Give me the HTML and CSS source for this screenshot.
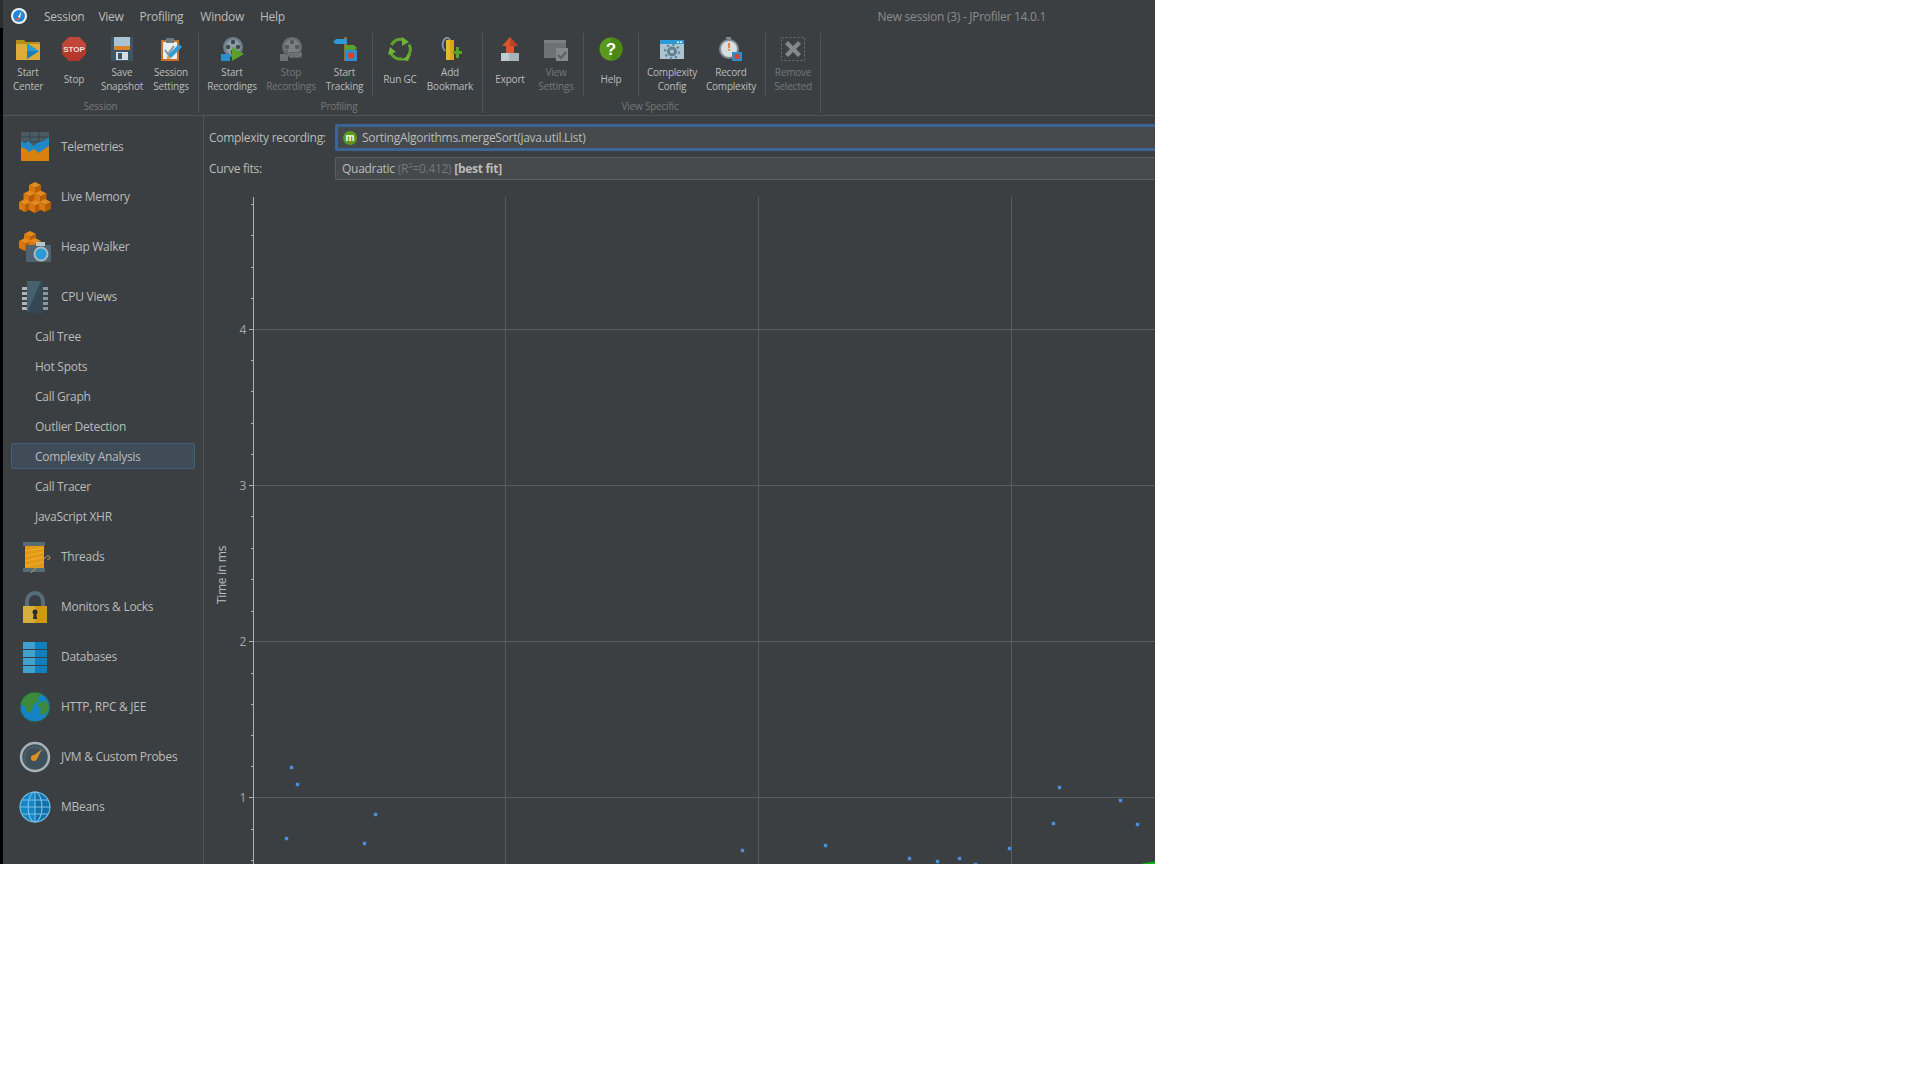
FILE: index.html
```html
<!DOCTYPE html>
<html lang="en">
<head>
<meta charset="utf-8">
<title>New session (3) - JProfiler 14.0.1</title>
<link rel="stylesheet" href="styles.css">
</head>
<body>
<div class="app">
  <div class="edge"></div>
  <div class="shell">
    <header class="menubar">
      <svg class="logo" viewBox="0 0 16 16"><circle cx="8" cy="8" r="8" fill="#eef4fa"/><circle cx="8" cy="8" r="6" fill="#1f86d8"/><path d="M10.500 3 7 9l2 1z" fill="#fff"/><circle cx="7" cy="11" r="1.600" fill="#e4572e"/></svg>
      <nav class="menus"><span>Session</span><span>View</span><span>Profiling</span><span>Window</span><span>Help</span></nav>
      <div class="title">New session (3) - JProfiler 14.0.1</div>
    </header>

    <div class="toolbar">
      <section class="group group-session">
        <div class="tools">
          <div class="tool"><svg class="ticon" viewBox="0 0 24 24"><path d="M0 3h8l2 2h14v18H0z" fill="#b88f1f"/><path d="M0 7h24v16H0z" fill="#dcae38"/><path d="M11 6l12 8-12 8z" fill="#2a9bd6"/><path d="M11 14h12l-12 8z" fill="#1c7fb8"/></svg><div class="tlabel">Start<br>Center</div></div>
          <div class="tool"><svg class="ticon" viewBox="0 0 24 24"><path d="M7 0h10l7 7v10l-7 7H7l-7-7V7z" fill="#b5382b"/><path d="M7 0h10l7 7v5H0V7z" fill="#c2473a"/><text class="stoptext" x="12" y="15" text-anchor="middle">STOP</text></svg><div class="tlabel">Stop</div></div>
          <div class="tool"><svg class="ticon" viewBox="0 0 24 24"><path d="M1 0h22v24H1z" fill="#3d5564"/><path d="M4 0h16v10H4z" fill="#a9c5d4"/><path d="M4 9h16v4H4z" fill="#d9822b"/><path d="M6 15h12v8H6z" fill="#d5dde2"/><path d="M8 16h4v6H8z" fill="#3d5564"/></svg><div class="tlabel">Save<br>Snapshot</div></div>
          <div class="tool"><svg class="ticon" viewBox="0 0 24 24"><path d="M2 3h18v21H2z" fill="#c9702a"/><path d="M4 5h14v17H4z" fill="#e9edf0"/><path d="M7 1h8v5H7z" fill="#6d7a82"/><path d="M6 13l3 4 6-8" fill="none" stroke="#8a969d" stroke-width="2"/><path d="M20 7l3 3-11 11-4 1 1-4z" fill="#2f9bd6"/><path d="M9 18l3 3-4 1z" fill="#e3a03a"/></svg><div class="tlabel">Session<br>Settings</div></div>
        </div>
        <div class="glabel">Session</div>
      </section>

      <section class="group group-profiling">
        <div class="tools">
          <div class="tool"><svg class="ticon" viewBox="0 0 24 24"><circle cx="13" cy="10" r="10" fill="#6f7d86"/><circle cx="13" cy="10" r="7.500" fill="#8f9ca4"/><circle cx="13" cy="5" r="2.200" fill="#3c4a53"/><circle cx="8" cy="10" r="2.200" fill="#3c4a53"/><circle cx="18" cy="10" r="2.200" fill="#3c4a53"/><circle cx="13" cy="15" r="2.200" fill="#3c4a53"/><path d="M1 17h9v7H1z" fill="#2a8fd0"/><path d="M12 10l12 7-12 7z" fill="#5aa02c"/></svg><div class="tlabel">Start<br>Recordings</div></div>
          <div class="tool"><svg class="ticon" viewBox="0 0 24 24"><circle cx="13" cy="10" r="10" fill="#6b6e70"/><circle cx="13" cy="10" r="7.500" fill="#7d8082"/><circle cx="13" cy="5" r="2.200" fill="#55585a"/><circle cx="8" cy="10" r="2.200" fill="#55585a"/><circle cx="18" cy="10" r="2.200" fill="#55585a"/><path d="M1 17h8v7H1z" fill="#6e7173"/><path d="M5 13h4v5H5z" fill="#626567"/><path d="M10 15h13v6H10z" fill="#5c5f61"/><text class="stopsmall" x="16.500" y="20" text-anchor="middle">STOP</text></svg><div class="tlabel dim">Stop<br>Recordings</div></div>
          <div class="tool"><svg class="ticon" viewBox="0 0 24 24"><path d="M11 0h3v24h-3z" fill="#9a6a2e"/><path d="M0 5l3-3h11v5H3z" fill="#2a9bd6"/><path d="M12 8h9l3 3-3 3h-9z" fill="#5aa02c"/><path d="M12 13h12v11H12z" fill="#2a8fd0"/><circle cx="18" cy="18.500" r="3.200" fill="#d8432f"/></svg><div class="tlabel">Start<br>Tracking</div></div>
          <div class="sep"></div>
          <div class="tool"><svg class="ticon" viewBox="0 0 24 24"><g fill="none" stroke="#5fa32e" stroke-width="3"><path d="M3.500 8A10 10 0 0 1 15 2.500"/><path d="M21 7.500A10 10 0 0 1 19 20"/><path d="M14.500 21.800A10 10 0 0 1 2.500 15"/></g><path d="M14 0l7 5-7 4zM23 17l-3 7-7-1zM0 18l2-8 6 5z" fill="#6db536"/></svg><div class="tlabel">Run GC</div></div>
          <div class="tool"><svg class="ticon" viewBox="0 0 24 24"><path d="M7 14C2 8 6 0 10 1c3 1 3 5 3 8" fill="none" stroke="#8b979e" stroke-width="1.800"/><path d="M8 3h8v20H8z" fill="#d9a520"/><path d="M8 3h4v20H8z" fill="#e8b92f"/><path d="M15 14h3v-4h3v4h3v3h-3v4h-3v-4h-3z" fill="#5aa02c"/></svg><div class="tlabel">Add<br>Bookmark</div></div>
        </div>
        <div class="glabel">Profiling</div>
      </section>

      <section class="group group-view">
        <div class="tools">
          <div class="tool"><svg class="ticon" viewBox="0 0 24 24"><path d="M12 0l8 9h-4v7H8V9H4z" fill="#d9542f"/><path d="M12 0l8 9h-8z" fill="#b8432a"/><path d="M3 16h18v8H3z" fill="#a8b4ba"/><path d="M3 16h8v8H3z" fill="#c0cbd0"/></svg><div class="tlabel">Export</div></div>
          <div class="tool tail"><svg class="ticon" viewBox="0 0 24 24"><path d="M0 3h22v18H0z" fill="#6f7274"/><path d="M0 3h22v3H0z" fill="#7d8082"/><path d="M12 11h12v13H12z" fill="#85888a"/><path d="M14 18l3 3 5-6" fill="none" stroke="#5b5e60" stroke-width="2"/></svg><div class="tlabel dim">View<br>Settings</div></div>
          <div class="sep"></div>
          <div class="tool"><svg class="ticon" viewBox="0 0 24 24"><circle cx="12" cy="12" r="11.500" fill="#5a9a1e"/><path d="M12 .5a11.500 11.500 0 0 1 0 23z" fill="#4a8a14"/><text class="helptext" x="12" y="18" text-anchor="middle">?</text></svg><div class="tlabel">Help</div></div>
          <div class="sep"></div>
          <div class="tool"><svg class="ticon" viewBox="0 0 24 24"><path d="M0 3h24v19H0z" fill="#a9c5d4"/><path d="M0 3h24v4H0z" fill="#2a9bd6"/><path d="M17 4.500h2v1.500h-2zM20 4.500h2v1.500h-2z" fill="#eaf4fa"/><circle cx="12" cy="14.500" r="5" fill="#66808f"/><circle cx="12" cy="14.500" r="7" fill="none" stroke="#66808f" stroke-width="2.200" stroke-dasharray="2.200 3.300"/><circle cx="12" cy="14.500" r="2" fill="#a9c5d4"/></svg><div class="tlabel">Complexity<br>Config</div></div>
          <div class="tool tail"><svg class="ticon" viewBox="0 0 24 24"><path d="M7 0h5v2H7z" fill="#7d8a92"/><circle cx="10" cy="12" r="10" fill="#7d8a92"/><circle cx="10" cy="12" r="8" fill="#d8dde0"/><path d="M9.200 6h1.600v5H9.200zM9.200 12h1.600v1.600H9.200z" fill="#d9742f"/><path d="M13 15h10v9H13z" fill="#2a8fd0"/><circle cx="18" cy="19.500" r="2.800" fill="#d8432f"/></svg><div class="tlabel">Record<br>Complexity</div></div>
          <div class="sep"></div>
          <div class="tool"><svg class="ticon" viewBox="0 0 24 24"><path d="M.5.500h23v23H.5z" fill="none" stroke="#6f7274" stroke-dasharray="2 2"/><path d="M7 4l5 5 5-5 3 3-5 5 5 5-3 3-5-5-5 5-3-3 5-5-5-5z" fill="#85888a"/></svg><div class="tlabel dim">Remove<br>Selected</div></div>
        </div>
        <div class="glabel">View Specific</div>
      </section>
    </div>

    <div class="main">
      <aside class="sidebar">
        <div class="row">
          <svg class="sicon" viewBox="0 0 32 32"><path d="M2 1h28v29H2z" fill="#4a5b66"/><path d="M11 1v12M20 1v12M2 6h28M2 11h28" stroke="#36424a" stroke-width="1"/><path d="M2 10l4 2 4-2 4 5 6-4 5-1 5-4v24H2z" fill="#1e88c9"/><path d="M2 16l5 2 3 3 5-3 5 4 5-4 5-3v15H2z" fill="#d9810d"/></svg>
          <span>Telemetries</span>
        </div>
        <div class="row">
          <svg class="sicon" viewBox="0 0 32 32"><defs><g id="cube"><path d="M0 3l6-3 6 3-6 3z" fill="#e38a1c"/><path d="M0 3l6 3v7l-6-3z" fill="#d9780d"/><path d="M12 3L6 6v7l6-3z" fill="#b85f06"/></g></defs><use href="#cube" x="10" y="1"/><use href="#cube" x="4.500" y="9.500"/><use href="#cube" x="15.500" y="9.500"/><use href="#cube" x="0" y="18"/><use href="#cube" x="10" y="19"/><use href="#cube" x="20" y="18"/></svg>
          <span>Live Memory</span>
        </div>
        <div class="row">
          <svg class="sicon" viewBox="0 0 32 32"><use href="#cube" x="5" y="0"/><use href="#cube" x="0" y="7"/><use href="#cube" x="10" y="7"/><path d="M7 14h25v17H7z" fill="#4f6470"/><path d="M17 11h9v4h-9z" fill="#b9c4ca"/><circle cx="22" cy="23" r="7.500" fill="#aeb9bf"/><circle cx="22" cy="23" r="5.500" fill="#2a9bd6"/></svg>
          <span>Heap Walker</span>
        </div>
        <div class="row">
          <svg class="sicon" viewBox="0 0 32 32"><path d="M3 6h6v3H3zM3 11h6v3H3zM3 16h6v3H3zM3 21h6v3H3zM3 26h6v3H3z" fill="#aab4ba"/><path d="M23 6h6v3h-6zM23 11h6v3h-6zM23 16h6v3h-6zM23 21h6v3h-6zM23 26h6v3h-6z" fill="#8b979e"/><path d="M8 0h16v32H8z" fill="#47606e"/><path d="M8 32L22 0h2v32z" fill="#344853"/></svg>
          <span>CPU Views</span>
        </div>
        <div class="sub"><span>Call Tree</span></div>
        <div class="sub"><span>Hot Spots</span></div>
        <div class="sub"><span>Call Graph</span></div>
        <div class="sub"><span>Outlier Detection</span></div>
        <div class="sub selected"><span>Complexity Analysis</span></div>
        <div class="sub"><span>Call Tracer</span></div>
        <div class="sub"><span>JavaScript XHR</span></div>
        <div class="row">
          <svg class="sicon" viewBox="0 0 32 32"><path d="M4 1h22v4H4zM4 27h22v4H4z" fill="#566c79"/><path d="M6 5h19v22H6z" fill="#e29a12"/><path d="M6 10l19-3M6 15l19-4M6 20l19-4M6 25l19-4" stroke="#eeb234" stroke-width="1"/><path d="M12 32L26 17c2-3 5-3 5 0-1 2-3 1-3 1" fill="none" stroke="#c9a45c" stroke-width="1"/></svg>
          <span>Threads</span>
        </div>
        <div class="row">
          <svg class="sicon" viewBox="0 0 32 32"><path d="M8 18V10a8 8 0 0 1 16 0v8" fill="none" stroke="#566c79" stroke-width="4"/><path d="M4 15h24v17H4z" fill="#cf9a10"/><path d="M4 15h12v17H4z" fill="#d6ae3c"/><circle cx="16" cy="21" r="2.500" fill="#2a2c2e"/><path d="M15 21h2l1 7h-4z" fill="#2a2c2e"/></svg>
          <span>Monitors &amp; Locks</span>
        </div>
        <div class="row">
          <svg class="sicon" viewBox="0 0 32 32"><path d="M4 1h24v7H4zM4 9h24v7H4zM4 17h24v7H4zM4 25h24v7H4z" fill="#0f7fbe"/><path d="M4 1h12v7H4zM4 9h12v7H4zM4 17h12v7H4zM4 25h12v7H4z" fill="#42a0cf"/></svg>
          <span>Databases</span>
        </div>
        <div class="row">
          <svg class="sicon" viewBox="0 0 32 32"><circle cx="16" cy="16" r="15" fill="#1482c4"/><path d="M4 8c3-5 9-7 15-7l4 3-5 3 3 3-6 3-2 7-4 2-3-6-4-3z" fill="#3d8a3a"/><path d="M18 14l8-5 4 6-1 5-5 5-3-3 1-4z" fill="#3d8a3a"/><circle cx="16" cy="16" r="15" fill="none" stroke="#2c5b36" stroke-width="1"/></svg>
          <span>HTTP, RPC &amp; JEE</span>
        </div>
        <div class="row">
          <svg class="sicon" viewBox="0 0 32 32"><circle cx="16" cy="16" r="14" fill="#3d505c" stroke="#a6b0b6" stroke-width="2.500"/><path d="M7 22a10.500 10.500 0 0 1 18-11" fill="none" stroke="#56697480" stroke-width="2"/><path d="M23 8l-5 10-4-3z" fill="#dd901f"/><circle cx="15" cy="17" r="3" fill="#dd901f"/></svg>
          <span>JVM &amp; Custom Probes</span>
        </div>
        <div class="row">
          <svg class="sicon" viewBox="0 0 32 32"><circle cx="16" cy="16" r="15" fill="#1585c6"/><path d="M16 1a15 15 0 0 1 0 30z" fill="#0f72ad"/><g fill="none" stroke="#7cc0e6" stroke-width="1.100"><circle cx="16" cy="16" r="15"/><ellipse cx="16" cy="16" rx="7" ry="15"/><path d="M16 1v30M1 16h30M3 9h26M3 23h26"/></g></svg>
          <span>MBeans</span>
        </div>
      </aside>

      <main class="content">
        <div class="formrow first">
          <label class="flabel">Complexity recording:</label>
          <div class="field focus">
            <svg class="micon" viewBox="0 0 14 14"><circle cx="7" cy="7" r="7" fill="#5a9a1e"/><text class="mtext" x="7" y="10" text-anchor="middle">m</text></svg>
            <span>SortingAlgorithms.mergeSort(java.util.List)</span>
          </div>
        </div>
        <div class="formrow second">
          <label class="flabel">Curve fits:</label>
          <div class="field plain"><span>Quadratic <span class="muted">(R<sup>2</sup>=0.412)</span> <b>[best fit]</b></span></div>
        </div>

        <svg class="chart" viewBox="204 181 951 683" preserveAspectRatio="xMinYMin slice">
          <g class="grid">
            <path d="M505.500 197V864M758.500 197V864M1011.500 197V864"/>
            <path d="M253 329.500H1155M253 485.500H1155M253 641.500H1155M253 797.500H1155"/>
          </g>
          <g class="axis">
            <path d="M253.500 197V864"/>
            <path d="M251 204.500h2M251 235.500h2M251 267.500h2M251 298.500h2M251 360.500h2M251 391.500h2M251 423.500h2M251 454.500h2M251 516.500h2M251 548.500h2M251 579.500h2M251 611.500h2M251 673.500h2M251 704.500h2M251 735.500h2M251 766.500h2M251 829.500h2M251 860.500h2"/>
            <path d="M249 329.500h4M249 485.500h4M249 641.500h4M249 797.500h4"/>
          </g>
          <g class="ticks">
            <text x="246" y="334" text-anchor="end">4</text>
            <text x="246" y="490" text-anchor="end">3</text>
            <text x="246" y="646" text-anchor="end">2</text>
            <text x="246" y="802" text-anchor="end">1</text>
          </g>
          <text class="ylabel" transform="translate(226 575) rotate(-90)" text-anchor="middle">Time in ms</text>
          <g class="dots">
            <rect x="290" y="766" width="3" height="3"/><rect x="296" y="783" width="3" height="3"/>
            <rect x="374" y="813" width="3" height="3"/><rect x="285" y="837" width="3" height="3"/>
            <rect x="363" y="842" width="3" height="3"/><rect x="741" y="849" width="3" height="3"/>
            <rect x="824" y="844" width="3" height="3"/><rect x="908" y="857" width="3" height="3"/>
            <rect x="936" y="860" width="3" height="3"/><rect x="958" y="857" width="3" height="3"/>
            <rect x="974" y="863" width="3" height="3"/><rect x="1008" y="847" width="3" height="3"/>
            <rect x="1058" y="786" width="3" height="3"/><rect x="1052" y="822" width="3" height="3"/>
            <rect x="1119" y="799" width="3" height="3"/><rect x="1136" y="823" width="3" height="3"/>
          </g>
          <path class="fit" d="M1140 864Q1148 862 1155 861.500V864Z"/>
        </svg>
      </main>
    </div>
  </div>
</div>
</body>
</html>
```

FILE: styles.css
```css
* { box-sizing: border-box; }
html, body { margin: 0; padding: 0; background: #fff; }
body { font-family: "Open Sans", "Noto Sans", sans-serif; font-size: 12px; letter-spacing: -0.28px; color: #bbb; }

.app { display: flex; width: 1155px; height: 864px; overflow: hidden; background: #3c3f41; }
.edge { flex: 0 0 3px; background: linear-gradient(#2b2d2f 28px, #000 28px); }
.shell { flex: 1; min-width: 0; display: flex; flex-direction: column; }

.menubar { flex: 0 0 33px; display: flex; align-items: center; padding-left: 8px; }
.logo { width: 16px; height: 16px; margin-right: 17px; margin-top: -2px; }
.menus { display: flex; gap: 16px; margin-top: -1px; }
.menus span:first-child { margin-right: -2px; }
.menus span:nth-child(3) { margin-right: 1px; }
.title { margin-left: auto; margin-right: 109px; margin-top: -1px; color: #8c8c8c; }

.toolbar { flex: 0 0 83px; display: flex; border-bottom: 1px solid #515355; }
.group { display: flex; flex-direction: column; height: 80px; border-right: 1px solid #515355; }
.group-session { width: 196px; padding-left: 3px; }
.group-profiling { width: 284px; }
.group-view { width: 338px; }
.tools { flex: 0 0 63px; display: grid; }
.group-session .tools { grid-template-columns: 44px 48px 48px 50px; }
.group-profiling .tools { grid-template-columns: 66px 52px 55px 1px 54px 46px; }
.group-view .tools { grid-template-columns: 54px 46px 1px 54px 1px 66px 60px 1px 54px; }

.tool { display: flex; flex-direction: column; align-items: center; padding-top: 4px; min-width: 0; }
.tail { margin-right: 8px; }
.ticon { width: 24px; height: 24px; flex: none; }
.tlabel { height: 28px; margin-top: 4px; display: flex; align-items: center; justify-content: center; text-align: center; font-size: 10px; letter-spacing: -0.2px; line-height: 14px; white-space: nowrap; }
.dim { color: #777; }
.sep { background: #515355; }
.glabel { text-align: center; padding-right: 3px; font-size: 10px; letter-spacing: -0.2px; line-height: 16px; margin-top: 2px; color: #777; }

.stoptext { font-family: "Liberation Sans", sans-serif; font-weight: 700; font-size: 8px; letter-spacing: 0; fill: #f2dfdc; }
.stopsmall { font-family: "Liberation Sans", sans-serif; font-weight: 700; font-size: 4.500px; letter-spacing: 0; fill: #85888a; }
.helptext { font-family: "Liberation Sans", sans-serif; font-weight: 700; font-size: 17px; letter-spacing: 0; fill: #fff; }
.mtext { font-family: "Liberation Sans", sans-serif; font-weight: 700; font-size: 10px; letter-spacing: 0; fill: #fff; }

.main { flex: 1; min-height: 0; display: flex; }
.sidebar { flex: 0 0 201px; display: flex; flex-direction: column; padding-top: 6px; border-right: 1px solid #515355; }
.row { flex: none; height: 50px; display: flex; align-items: center; gap: 10px; padding-left: 16px; }
.row span { margin-top: -1px; }
.sicon { width: 32px; height: 32px; flex: none; }
.sub { flex: none; height: 26px; margin: 1px 8px 3px; padding-left: 23px; display: flex; align-items: center; border: 1px solid transparent; border-radius: 2px; }
.selected { background: #3f4c57; border-color: #40617f; }

.content { flex: 1; min-width: 0; display: flex; flex-direction: column; overflow: hidden; padding-top: 8px; }
.formrow { display: flex; align-items: center; padding-left: 5px; flex: none; }
.first { height: 27px; margin-bottom: 6px; }
.second { height: 23px; margin-bottom: 1px; }
.flabel { flex: 0 0 126px; }
.field { flex: 1; height: 100%; display: flex; align-items: center; background: #46494b; border: 1px solid #5b5d5f; border-right: 0; border-radius: 2px 0 0 2px; }
.focus { border: 3px solid #3c6596; border-right: 0; padding-left: 5px; gap: 5px; }
.plain { padding-left: 6px; }
.micon { width: 14px; height: 14px; flex: none; }
.muted { color: #777; }
.muted sup { font-size: 8px; line-height: 0; }
.plain b { font-weight: 700; }

.chart { flex: 1; min-height: 0; display: block; width: 951px; }
.grid path { fill: none; stroke: #5a5c5e; stroke-width: 1; shape-rendering: crispEdges; }
.axis path { fill: none; stroke: #b0b2b3; stroke-width: 1; shape-rendering: crispEdges; }
.ticks text { fill: #aaa; font-size: 12px; }
.ylabel { fill: #bbb; font-size: 12px; }
.dots rect { fill: #4a8fe0; stroke: #4a8fe0; stroke-opacity: 0.35; stroke-width: 1; }
.fit { fill: #0fb00f; }
```
